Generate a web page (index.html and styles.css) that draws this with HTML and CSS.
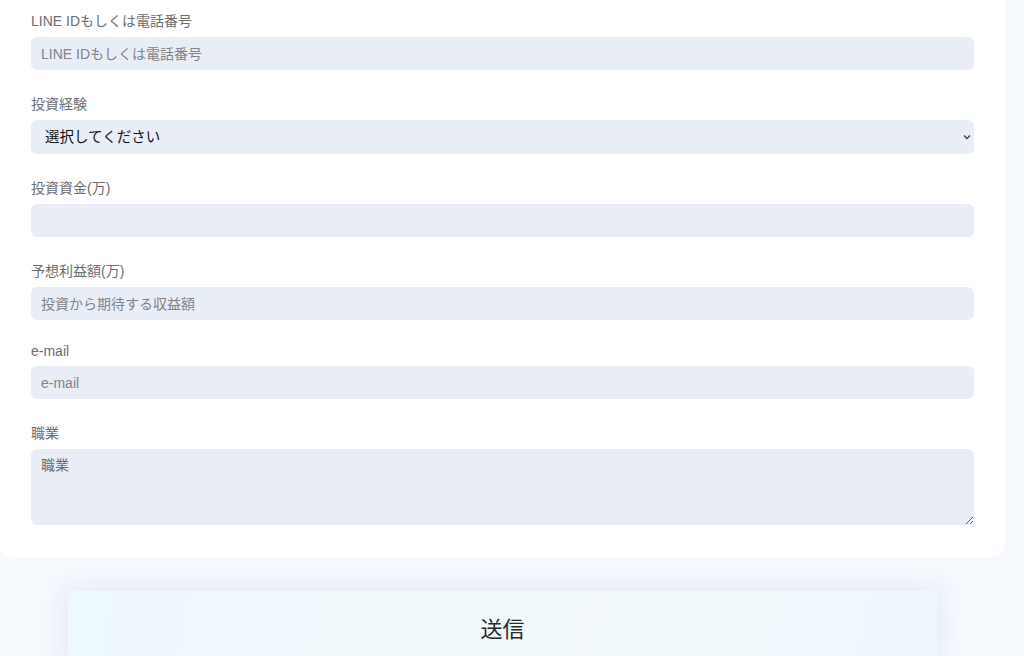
FILE: index.html
```html
<!DOCTYPE html>
<html lang="ja">
<head>
<meta charset="utf-8">
<title>フォーム</title>
<link rel="stylesheet" href="styles.css">
</head>
<body>
<div class="page">
  <form class="card">
    <div class="field">
      <label class="label">LINE IDもしくは電話番号</label>
      <input class="control" type="text" placeholder="LINE IDもしくは電話番号">
    </div>
    <div class="field">
      <label class="label">投資経験</label>
      <div class="select-wrap">
        <select class="control select">
          <option>選択してください</option>
        </select>
        <svg class="chevron" width="8" height="6" viewBox="0 0 8 6"><path d="M1 1.5 L4 4.5 L7 1.5" fill="none" stroke="#444" stroke-width="1.4"/></svg>
      </div>
    </div>
    <div class="field">
      <label class="label">投資資金(万)</label>
      <input class="control" type="text">
    </div>
    <div class="field">
      <label class="label">予想利益額(万)</label>
      <input class="control" type="text" placeholder="投資から期待する収益額">
    </div>
    <div class="field">
      <label class="label">e-mail</label>
      <input class="control" type="email" placeholder="e-mail">
    </div>
    <div class="field last">
      <label class="label">職業</label>
      <textarea class="control area" placeholder="職業"></textarea>
    </div>
  </form>
  <div class="actions">
    <button class="submit" type="button">送信</button>
  </div>
</div>
</body>
</html>
```

FILE: styles.css
```css
html, body {
  margin: 0;
  padding: 0;
  background: #f6f9fe;
  font-family: "Liberation Sans", "Noto Sans CJK JP", sans-serif;
  overflow: hidden;
}

.page {
  width: 1005px;
}

.card {
  background: #ffffff;
  border-radius: 0 0 12px 12px;
  padding: 10px 31px 32px 31px;
  display: flex;
  flex-direction: column;
}

.field {
  display: flex;
  flex-direction: column;
  margin-bottom: 23px;
}

.field.last {
  margin-bottom: 0;
}

.label {
  font-size: 14px;
  color: #6b6e72;
  margin-bottom: 7px;
}

.control {
  box-sizing: border-box;
  width: 100%;
  height: 33px;
  border: none;
  border-radius: 6px;
  background: #e9edf6;
  padding: 0 10px;
  font-family: "Liberation Sans", "Noto Sans CJK JP", sans-serif;
  font-size: 14px;
  color: #222;
  outline: none;
}

.control::placeholder {
  color: #828488;
}

.select-wrap {
  position: relative;
}

.select {
  -webkit-appearance: none;
  appearance: none;
  height: 34px;
  padding: 0 14px;
  color: #111;
  font-size: 14.5px;
}

.chevron {
  position: absolute;
  right: 3px;
  top: 14px;
  pointer-events: none;
}

.area {
  height: 76px;
  padding: 5px 10px;
  resize: vertical;
  display: block;
}

.area::placeholder {
  color: #6b6e72;
}

.actions {
  display: flex;
  justify-content: center;
  padding: 34px 68px 40px 68px;
}

.submit {
  width: 100%;
  height: 72px;
  border: 1px solid #f4f8fb;
  border-radius: 5px;
  background: linear-gradient(100deg, #eef9fd 0%, #f2f8fc 60%, #eef8fc 100%);
  box-shadow: 0 0 22px 8px rgba(170, 178, 200, 0.16);
  font-family: "Liberation Sans", "Noto Sans CJK JP", sans-serif;
  font-size: 22px;
  color: #2a2a2a;
  cursor: pointer;
}
```
